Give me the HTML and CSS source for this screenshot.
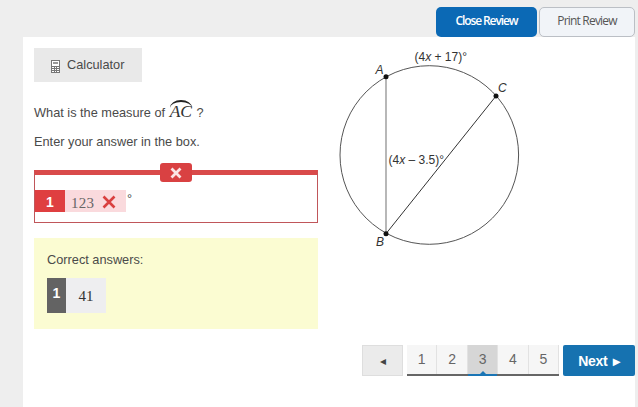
FILE: index.html
```html
<!DOCTYPE html>
<html lang="en">
<head>
    <meta charset="UTF-8">
    <title>Review</title>
    <link rel="stylesheet" href="styles.css">
</head>
<body>
    <div class="topbar">
        <button class="btn-close">Close Review</button>
        <button class="btn-print">Print Review</button>
    </div>

    <div class="panel">
        <div class="columns">
            <div class="left">
                <div class="calc">
                    <svg class="calc-icon" width="9" height="13" viewBox="0 0 9 13">
                        <rect x="0.5" y="0.5" width="8" height="12" fill="#fff" stroke="#777"/>
                        <rect x="2" y="2" width="5" height="2" fill="#999"/>
                        <path d="M0.5 6.5H8.5M0.5 8.5H8.5M0.5 10.5H8.5M3.5 6.5V12.5M5.5 6.5V12.5" stroke="#777" stroke-width="1" fill="none"/>
                    </svg>
                    Calculator
                </div>
                <p class="question">What is the measure of <span class="arc">AC</span> ?</p>
                <p class="enter">Enter your answer in the box.</p>

                <div class="answer">
                    <div class="wrong-tab">
                        <svg width="12" height="12" viewBox="0 0 12 12">
                            <path d="M1.5 1.5L10.5 10.5M10.5 1.5L1.5 10.5" stroke="#fbe4e4" stroke-width="2.8" fill="none"/>
                        </svg>
                    </div>
                    <div class="answer-row">
                        <span class="chip-num">1</span>
                        <span class="chip-val"><span class="chip-text">123</span>
                            <svg class="chip-x" width="14" height="14" viewBox="0 0 14 14">
                                <path d="M1.5 1.5L12.5 12.5M12.5 1.5L1.5 12.5" stroke="#d9403f" stroke-width="2.6" fill="none"/>
                            </svg>
                        </span>
                        <span class="deg">°</span>
                    </div>
                </div>

                <div class="correct">
                    <div class="correct-title">Correct answers:</div>
                    <div class="correct-chip">
                        <span class="correct-num">1</span>
                        <span class="correct-val">41</span>
                    </div>
                </div>
            </div>

            <div class="right">
                <svg class="diagram" width="200" height="215" viewBox="330 40 200 215">
                    <circle cx="429.3" cy="155" r="89.3" fill="none" stroke="#555" stroke-width="1"/>
                    <line x1="386" y1="76.7" x2="386" y2="233.7" stroke="#888" stroke-width="1.2"/>
                    <line x1="386" y1="233.7" x2="496" y2="96" stroke="#333" stroke-width="1"/>
                    <circle cx="386" cy="76.7" r="2.5" fill="#111"/>
                    <circle cx="386" cy="233.7" r="2.5" fill="#111"/>
                    <circle cx="496" cy="96" r="2.5" fill="#111"/>
                    <text class="pt" x="375.5" y="73.5">A</text>
                    <text class="pt" x="376" y="246">B</text>
                    <text class="pt" x="498" y="92">C</text>
                    <text class="lbl" x="414.5" y="61">(4<tspan font-style="italic">x</tspan> + 17)°</text>
                    <text class="lbl" x="388.5" y="164">(4<tspan font-style="italic">x</tspan> – 3.5)°</text>
                </svg>
            </div>
        </div>

        <nav class="pager">
            <button class="prev">◂</button>
            <div class="pages">
                <span class="page">1</span>
                <span class="page">2</span>
                <span class="page current">3</span>
                <span class="page">4</span>
                <span class="page">5</span>
            </div>
            <button class="next">Next ▸</button>
        </nav>
    </div>
</body>
</html>
```

FILE: styles.css
```css
html, body {
    margin: 0;
    padding: 0;
    height: 407px;
    overflow: hidden;
}
body {
    background: #eeeeee;
    font-family: "Liberation Sans", Arial, sans-serif;
    color: #4a4a4a;
    font-size: 12.75px;
}
.topbar {
    height: 37px;
    display: flex;
    justify-content: flex-end;
    align-items: flex-start;
    gap: 2px;
    padding: 7px 3px 0 0;
    box-sizing: border-box;
}
.topbar button {
    height: 30px;
    border-radius: 5px;
    font-family: "Open Sans", sans-serif;
    font-size: 12px;
    padding: 0 0 3px;
}
.btn-close {
    width: 101px;
    background: #0b69b5;
    color: #fff;
    border: none;
    font-weight: 600;
    letter-spacing: -1.1px;
}
.btn-print {
    width: 96px;
    background: #f1f4f8;
    color: #555;
    border: 1px solid #bbbfc5;
    letter-spacing: -0.8px;
}
.panel {
    margin: 0 3px 0 23px;
    background: #fff;
    height: 370px;
    padding: 11px 0 0 11px;
    box-sizing: border-box;
}
.columns {
    display: flex;
    height: 297px;
}
.left {
    width: 284px;
}
.right {
    margin: -8px 0 0 12px;
}
.diagram {
    display: block;
}
.pt {
    font-size: 12px;
    font-style: italic;
    fill: #333;
}
.lbl {
    font-size: 12px;
    fill: #333;
}
.calc {
    width: 108px;
    height: 34px;
    background: #e9e9e9;
    box-sizing: border-box;
    padding-left: 17px;
    line-height: 33px;
    display: flex;
    gap: 7px;
}
.calc-icon {
    margin-top: 12px;
}
.question {
    margin: 20px 0 0;
    height: 18px;
    line-height: 18px;
}
.arc {
    display: inline-block;
    position: relative;
    font-family: "Liberation Serif", serif;
    font-style: italic;
    font-size: 17.5px;
    line-height: 18px;
    margin: 0 1px;
    color: #333;
}
.arc::before {
    content: "";
    position: absolute;
    left: 0;
    right: 0;
    top: -2px;
    height: 6px;
    border-top: 2px solid #222;
    border-radius: 50% 50% 0 0 / 100% 100% 0 0;
}
.enter {
    margin: 13px 0 0;
    line-height: 18px;
}
.answer {
    position: relative;
    margin-top: 19px;
    height: 53px;
    box-sizing: border-box;
    border: 1px solid #c0565a;
    border-top: 5px solid #d94a4a;
}
.wrong-tab {
    position: absolute;
    top: -12px;
    left: 125px;
    width: 32px;
    height: 19px;
    background: #d94142;
    border-radius: 3px;
    display: flex;
    align-items: center;
    justify-content: center;
}
.answer-row {
    display: flex;
    height: 22px;
    margin-top: 15px;
}
.chip-num {
    width: 30px;
    background: #df3f40;
    color: #fff;
    font-size: 14px;
    font-weight: bold;
    text-align: center;
    line-height: 24px;
}
.chip-val {
    width: 61px;
    box-sizing: border-box;
    background: #fadadd;
    padding-left: 6px;
    display: flex;
    align-items: center;
    gap: 8px;
}
.chip-text {
    font-family: "Liberation Serif", serif;
    font-size: 15px;
    color: #666;
    letter-spacing: 0.3px;
    margin-top: 4px;
}
.chip-x {
    flex: none;
    margin-top: 1px;
}
.deg {
    margin-left: 1px;
    line-height: 18px;
}
.correct {
    margin-top: 15px;
    height: 91px;
    background: #fbfcd2;
    padding: 13px 13px 0;
    box-sizing: border-box;
}
.correct-title {
    line-height: 18px;
}
.correct-chip {
    display: flex;
    margin-top: 9px;
    height: 35px;
}
.correct-num {
    width: 19px;
    background: #636363;
    color: #fff;
    font-size: 14px;
    font-weight: bold;
    text-align: center;
    line-height: 30px;
}
.correct-val {
    width: 40px;
    background: #eeeef0;
    font-family: "Liberation Serif", serif;
    font-size: 15px;
    text-align: center;
    line-height: 37px;
    color: #333;
}
.pager {
    display: flex;
    justify-content: flex-end;
    height: 31px;
}
.pager button {
    padding: 0;
    height: 31px;
}
.prev {
    width: 41px;
    margin-right: 4px;
    background: #ebebeb;
    border: 1px solid #dedede;
    color: #444;
    font-size: 12px;
}
.pages {
    display: flex;
    height: 31px;
    box-sizing: border-box;
    border-bottom: 2px solid #666;
    margin-right: 4px;
}
.page {
    width: 30.4px;
    position: relative;
    box-sizing: border-box;
    background: #f6f6f6;
    border-right: 1px solid #e2e2e2;
    text-align: center;
    font-size: 14px;
    line-height: 28px;
    color: #666;
}
.page.current {
    background: #d6d6d6;
}
.page.current::after {
    content: "";
    position: absolute;
    left: 0;
    right: 0;
    bottom: -2px;
    height: 2px;
    background: #1a75b5;
}
.page.current::before {
    content: "";
    position: absolute;
    left: 50%;
    margin-left: -3px;
    bottom: 0;
    border: 3px solid transparent;
    border-top: 0;
    border-bottom-color: #1a75b5;
}
.next {
    width: 72px;
    background: #1672b0;
    color: #fff;
    border: none;
    border-radius: 2px;
    font-size: 14px;
    font-weight: bold;
    letter-spacing: -0.3px;
    word-spacing: 2px;
    padding-bottom: 2px;
}
```
